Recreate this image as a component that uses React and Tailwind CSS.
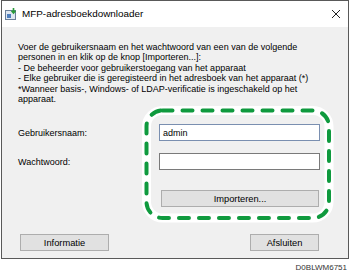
import React from 'react';

const ui = { fontFamily: '"Liberation Sans", Arial, sans-serif' };

function AppIcon() {
  return (
    <svg width="12" height="12" viewBox="0 0 12 12">
      <rect x="0.5" y="2.5" width="10" height="9" fill="#dfe7f1" stroke="#6b7f99" />
      <rect x="2" y="6" width="4" height="4" fill="#4f7fbf" />
      <path d="M8.5 0 V4.5 M6.5 2.8 L8.5 5 L10.5 2.8" stroke="#2a9a3a" strokeWidth="1.6" fill="none" />
    </svg>
  );
}

function Button({ children, className }) {
  return (
    <div className={`flex items-center justify-center h-[17px] bg-[#e1e1e1] border border-[#adadad] text-[9.3px] text-black ${className}`}>
      {children}
    </div>
  );
}

export default function App() {
  return (
    <div className="relative w-[350px] h-[275px] bg-white overflow-hidden" style={ui}>
      <div className="ml-[1px] w-[348px] h-[259px] border border-[#595959] flex flex-col">
        <div className="h-[26px] bg-white flex items-center pl-[3px] pr-[7px] shrink-0">
          <AppIcon />
          <span className="ml-[5px] text-[9.9px] text-black">MFP-adresboekdownloader</span>
          <svg className="ml-auto" width="10" height="10" viewBox="0 0 10 10">
            <path d="M1 1 L9 9 M9 1 L1 9" stroke="#222" strokeWidth="1" />
          </svg>
        </div>
        <div className="flex-1 bg-[#f0f0f0] pl-[16px] pt-[15px] text-[9px] leading-[10.4px] text-black">
          <p>Voer de gebruikersnaam en het wachtwoord van een van de volgende</p>
          <p>personen in en klik op de knop [Importeren...]:</p>
          <p>- De beheerder voor gebruikerstoegang van het apparaat</p>
          <p>- Elke gebruiker die is geregisteerd in het adresboek van het apparaat (*)</p>
          <p>*Wanneer basis-, Windows- of LDAP-verificatie is ingeschakeld op het</p>
          <p>apparaat.</p>

          <div className="mt-[20px] flex items-center">
            <span className="w-[141px]">Gebruikersnaam:</span>
            <div className="w-[161px] h-[17px] bg-white border border-[#7a8fb0] flex items-center px-[3px]">admin</div>
          </div>
          <div className="mt-[12px] flex items-center">
            <span className="w-[141px]">Wachtwoord:</span>
            <div className="w-[161px] h-[17px] bg-white border border-[#7a7a7a]" />
          </div>
          <div className="mt-[20px] pl-[143px]">
            <Button className="w-[158px]">Importeren...</Button>
          </div>
          <div className="mt-[27px] flex">
            <Button className="ml-[2px] w-[89px]">Informatie</Button>
            <Button className="ml-[141px] w-[69px]">Afsluiten</Button>
          </div>
        </div>
      </div>
      <svg className="absolute left-0 top-0 pointer-events-none" width="350" height="275">
        <rect x="146.5" y="110.5" width="182.5" height="107.5" rx="16" fill="none" stroke="#fff" strokeWidth="9" />
        <rect x="146.5" y="110.5" width="182.5" height="107.5" rx="16" fill="none" stroke="#0f9a3e" strokeWidth="4" strokeLinecap="round" strokeDasharray="10 10" />
      </svg>
      <div className="absolute right-[3px] top-[262px] text-[8px] text-[#333]" style={ui}>D0BLWM6751</div>
    </div>
  );
}
